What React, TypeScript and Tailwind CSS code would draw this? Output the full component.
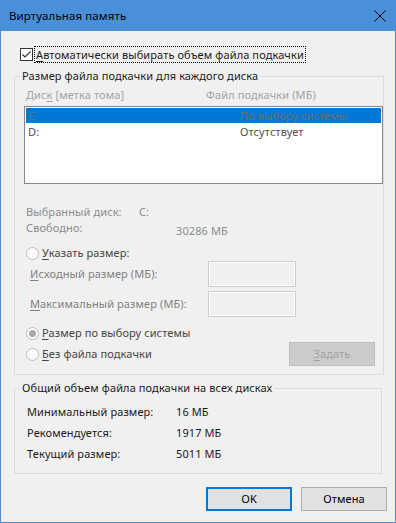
import type { ReactNode } from "react";

// accelerator letter, underlined like in the Win32 dialog
function U({ children }: { children: ReactNode }) {
  return <span className="underline underline-offset-[2px] decoration-1">{children}</span>;
}

function Radio({ checked }: { checked?: boolean }) {
  return (
    <span className="flex h-[13px] w-[13px] shrink-0 items-center justify-center rounded-full border border-[#bcbcbc] bg-[#fcfcfc]">
      {checked && <span className="h-[7px] w-[7px] rounded-full bg-[#a9a9a9]" />}
    </span>
  );
}

function Field() {
  return (
    <div className="h-[26px] w-[88px] border border-[#cccccc] bg-[#f0f0f0] shadow-[inset_1px_1px_0_#ffffff,inset_-1px_-1px_0_#ffffff]" />
  );
}

const totals = [
  { label: "Минимальный размер:", value: "16 МБ" },
  { label: "Рекомендуется:", value: "1917 МБ" },
  { label: "Текущий размер:", value: "5011 МБ" },
];

export default function App() {
  return (
    <div className="flex h-[523px] w-[396px] flex-col border-x border-b border-[#4a90d9] bg-[#f0f0f0] font-['Segoe_UI','Noto_Sans',sans-serif] text-[11px] leading-[16px] tracking-[0.1px] text-black">
      {/* title bar */}
      <div className="flex h-[31px] shrink-0 items-center justify-between bg-[#4a90d9] pl-[8px] pr-[9px]">
        <span className="text-[11.5px] text-black">Виртуальная память</span>
        <svg width="12" height="12" viewBox="0 0 12 12" className="text-black">
          <path d="M0.5 0.5 L11.5 11.5 M11.5 0.5 L0.5 11.5" stroke="currentColor" strokeWidth="1" />
        </svg>
      </div>

      <div className="flex flex-col px-[13px]">
        {/* auto checkbox */}
        <div className="mt-[14px] flex h-[18px] items-center pl-[6px]">
          <span className="flex h-[13px] w-[13px] shrink-0 items-center justify-center border border-[#333333] bg-white">
            <svg width="11" height="11" viewBox="0 0 11 11">
              <path d="M1.5 5.5 L4 8 L9.5 2.5" fill="none" stroke="#333333" strokeWidth="1.2" />
            </svg>
          </span>
          <span className="ml-[1px] border border-dotted border-black px-[1px] leading-[15px] text-[#1a1a1a]">
            <U>А</U>втоматически выбирать объем файла подкачки
          </span>
        </div>

        {/* per-disk group */}
        <fieldset className="mt-[5px] border border-[#dcdcdc] pb-[8px]">
          <legend className="ml-[5px] px-[2px] text-[#1a1a1a]">Размер файла подкачки для каждого диска</legend>

          <div className="mt-[3px] flex h-[16px] text-[#a3a3a3]">
            <span className="w-[191px] pl-[11px]">
              Дис<U>к</U> [метка тома]
            </span>
            <span>Файл подкачки (МБ)</span>
          </div>

          <div className="ml-[9px] mt-[3px] h-[78px] w-[359px] border border-[#828790] bg-white p-[1px]">
            <div className="flex h-[15px] items-center bg-[#0078d7] pl-[2px] leading-[15px] text-[#6d6d6d]">
              <span className="w-[212px]">C:</span>
              <span>По выбору системы</span>
            </div>
            <div className="flex h-[16px] items-center pl-[2px] leading-[15px] text-[#505050]">
              <span className="w-[212px]">D:</span>
              <span>Отсутствует</span>
            </div>
          </div>

          <div className="mt-[20px] flex h-[16px] pl-[11px] text-[#8c8c8c]">
            <span className="w-[113px]">Выбранный диск:</span>
            <span>C:</span>
          </div>
          <div className="flex h-[19px] pl-[11px] text-[#8c8c8c]">
            <span className="w-[150px]">Свободно:</span>
            <span className="mt-[3px]">30286 МБ</span>
          </div>

          <div className="mt-[6px] flex h-[16px] items-center pl-[11px] text-[#454545]">
            <Radio />
            <span className="ml-[3px]">
              <U>У</U>казать размер:
            </span>
          </div>

          <div className="flex h-[26px] items-center pl-[15px] text-[#808080]">
            <span className="w-[178px]">
              <U>И</U>сходный размер (МБ):
            </span>
            <Field />
          </div>
          <div className="mt-[4px] flex h-[26px] items-center pl-[15px] text-[#808080]">
            <span className="w-[178px]">
              <U>М</U>аксимальный размер (МБ):
            </span>
            <Field />
          </div>

          <div className="mt-[8px] flex h-[16px] items-center pl-[11px] text-[#454545]">
            <Radio checked />
            <span className="ml-[3px]">
              <U>Р</U>азмер по выбору системы
            </span>
          </div>

          <div className="mt-[1px] flex h-[24px] items-center pl-[11px] pr-[8px] text-[#454545]">
            <Radio />
            <span className="ml-[3px]">
              <U>Б</U>ез файла подкачки
            </span>
            <button className="ml-auto h-[24px] w-[86px] border border-[#bfbfbf] bg-[#cccccc] text-[#a0a0a0]">
              <U>З</U>адать
            </button>
          </div>
        </fieldset>

        {/* totals group */}
        <fieldset className="mt-[5px] border border-[#dcdcdc] pb-[9px]">
          <legend className="ml-[5px] px-[2px] text-[#1a1a1a]">Общий объем файла подкачки на всех дисках</legend>
          <div className="mt-[5px] flex flex-col">
            {totals.map((t) => (
              <div key={t.label} className="flex h-[21px] items-center pl-[12px] text-[#1a1a1a]">
                <span className="w-[149px]">{t.label}</span>
                <span>{t.value}</span>
              </div>
            ))}
          </div>
        </fieldset>

        {/* dialog buttons */}
        <div className="-mr-[5px] mt-[13px] flex justify-end gap-[9px]">
          <button className="h-[24px] w-[86px] border-2 border-[#0078d7] bg-[#e1e1e1] text-black">OK</button>
          <button className="h-[24px] w-[86px] border border-[#adadad] bg-[#e1e1e1] text-black">Отмена</button>
        </div>
      </div>
    </div>
  );
}
